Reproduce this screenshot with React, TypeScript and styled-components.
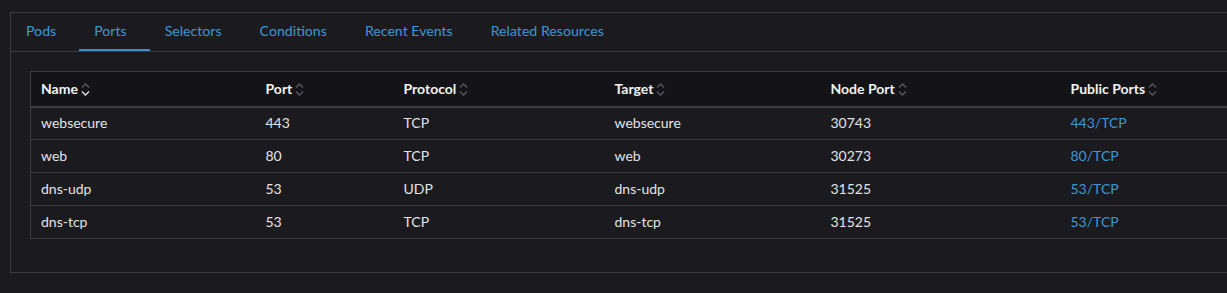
import React from "react";
import styled, { createGlobalStyle } from "styled-components";

const Global = createGlobalStyle`
  html, body { margin: 0; padding: 0; background: #1b1b1f; overflow: hidden; }
  body { font-family: Lato, "Noto Sans", sans-serif; color: #e6e6e6; }
`;

const Page = styled.div`
  padding: 12px 0 0 10px;
  width: 1300px;
`;

const Panel = styled.div`
  border: 1px solid #3c3c41;
  width: 1260px;
  box-sizing: border-box;
`;

const TabBar = styled.div`
  display: flex;
  border-bottom: 1px solid #3c3c41;
  height: 38px;
`;

const Tab = styled.div<{ $active?: boolean }>`
  display: flex;
  align-items: center;
  padding: 0 23px 1px 15px;
  font-size: 14.15px;
  color: #3d97d3;
  box-sizing: border-box;
  height: 38px;
  border-bottom: 2px solid ${(p) => (p.$active ? "#3a8fcc" : "transparent")};
`;

const Body = styled.div`
  padding: 19px 20px 33px 19px;
`;

const Table = styled.table`
  border-collapse: collapse;
  width: 100%;
  border: 1px solid #3c3c41;
  font-size: 14px;
`;

const HeadRow = styled.tr`
  background: #141418;
  border-bottom: 2px solid #3c3c41;
`;

const Th = styled.th`
  text-align: left;
  font-weight: 700;
  color: #f2f2f2;
  height: 35px;
  padding: 0 10px;
  box-sizing: border-box;
  white-space: nowrap;
`;

const Row = styled.tr`
  border-bottom: 1px solid #3c3c41;
`;

const Td = styled.td`
  height: 33px;
  padding: 0 10px 1px;
  color: #e4e4e4;
  box-sizing: border-box;
`;

const Link = styled.span`
  color: #3d97d3;
`;

const HeadInner = styled.span`
  display: inline-flex;
  align-items: center;
  gap: 3px;
`;

function SortIcon({ down }: { down?: boolean }) {
  return (
    <svg width="9" height="15" viewBox="0 0 9 15" style={{ marginTop: 2 }}>
      <path d="M1 5.5 L4.5 2 L8 5.5" fill="none" stroke="#5a5a60" strokeWidth="1.3" />
      <path
        d="M1 9.5 L4.5 13 L8 9.5"
        fill="none"
        stroke={down ? "#e6e6e6" : "#5a5a60"}
        strokeWidth="1.3"
      />
    </svg>
  );
}

const cols = [
  { name: "Name", w: 225 },
  { name: "Port", w: 138 },
  { name: "Protocol", w: 211 },
  { name: "Target", w: 216 },
  { name: "Node Port", w: 240 },
  { name: "Public Ports", w: undefined },
];

const rows = [
  ["websecure", "443", "TCP", "websecure", "30743", "443/TCP"],
  ["web", "80", "TCP", "web", "30273", "80/TCP"],
  ["dns-udp", "53", "UDP", "dns-udp", "31525", "53/TCP"],
  ["dns-tcp", "53", "TCP", "dns-tcp", "31525", "53/TCP"],
];

const tabs = ["Pods", "Ports", "Selectors", "Conditions", "Recent Events", "Related Resources"];

export default function App() {
  return (
    <Page>
      <Global />
      <Panel>
        <TabBar>
          {tabs.map((t) => (
            <Tab key={t} $active={t === "Ports"}>
              {t}
            </Tab>
          ))}
        </TabBar>
        <Body>
          <Table>
            <colgroup>
              {cols.map((c) => (
                <col key={c.name} style={c.w ? { width: c.w } : undefined} />
              ))}
            </colgroup>
            <thead>
              <HeadRow>
                {cols.map((c, i) => (
                  <Th key={c.name}>
                    <HeadInner>
                      {c.name}
                      <SortIcon down={i === 0} />
                    </HeadInner>
                  </Th>
                ))}
              </HeadRow>
            </thead>
            <tbody>
              {rows.map((r) => (
                <Row key={r[0]}>
                  {r.map((cell, i) => (
                    <Td key={i}>{i === 5 ? <Link>{cell}</Link> : cell}</Td>
                  ))}
                </Row>
              ))}
            </tbody>
          </Table>
        </Body>
      </Panel>
    </Page>
  );
}
